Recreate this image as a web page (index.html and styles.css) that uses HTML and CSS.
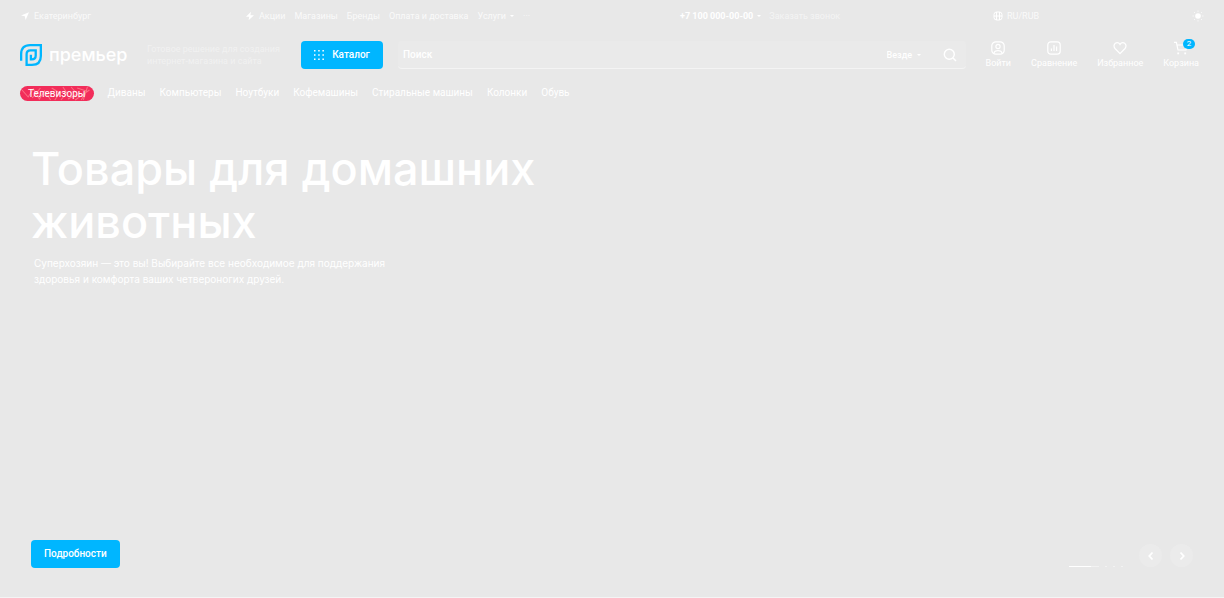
FILE: index.html
```html
<!DOCTYPE html>
<html lang="ru">
<head>
<meta charset="utf-8">
<meta name="viewport" content="width=device-width, initial-scale=1">
<title>Премьер</title>
<link rel="stylesheet" href="styles.css">
</head>
<body>
<div class="page">
  <header class="header">
    <div class="topbar">
      <a class="topbar-link" href="#"><svg class="icon-small" viewBox="0 0 10 10"><path d="M1 4.6 9 1.2 5.6 9 4.8 5.3Z" fill="currentColor"/></svg>Екатеринбург</a>
      <nav class="topmenu" aria-label="Основное меню">
        <a class="topbar-link" href="#"><svg class="icon-small" viewBox="0 0 10 10"><path d="M6 .8 1 5.8h3.2L3.6 9.2 9 4.2H5.4Z" fill="currentColor"/></svg>Акции</a>
        <a href="#">Магазины</a>
        <a href="#">Бренды</a>
        <a href="#">Оплата и доставка</a>
        <a class="with-caret" href="#">Услуги</a>
        <a href="#" aria-label="Ещё">···</a>
      </nav>
      <div class="contacts">
        <a class="phone with-caret" href="tel:+71000000000">+7 100 000-00-00</a>
        <a class="callback" href="#">Заказать звонок</a>
      </div>
      <div class="settings">
        <a class="topbar-link" href="#"><svg class="icon-small" viewBox="0 0 10 10" fill="none" stroke="currentColor"><rect x="1" y="1" width="8" height="8" rx="2.6"/><path d="M3.5 1v8M6.5 1v8M1 5h8"/></svg>RU/RUB</a>
        <button class="theme" aria-label="Тема"><svg viewBox="0 0 12 12"><circle cx="6" cy="6" r="2.8" fill="currentColor"/><path d="M6 .6v1M6 10.4v1M.6 6h1M10.4 6h1M2.1 2.1l.7.7M9.2 9.2l.7.7M2.1 9.9l.7-.7M9.2 2.8l.7-.7" stroke="currentColor"/></svg></button>
      </div>
    </div>

    <div class="mainbar">
      <a class="logo" href="#">
        <svg class="logo-mark" viewBox="0 0 21 21" fill="none" stroke="#00b6ff" stroke-width="2.2"><path d="M1.1 16V9.6Q1.1 1.1 9.6 1.1H19.9V11.4Q19.9 19.9 11.4 19.9H6.3V9.8Q6.3 6.1 10 6.1H15V11Q15 14.7 11.3 14.7H10.4V10.3"/></svg>
        <span>премьер</span>
      </a>
      <p class="tagline">Готовое решение для создания интернет-магазина и сайта</p>
      <button class="catalog"><svg class="catalog-icon" viewBox="0 0 10 10" fill="currentColor"><path d="M0 0h1.5v1.5H0zM4.2 0h1.5v1.5H4.2zM8.4 0h1.5v1.5H8.4zM0 4.2h1.5v1.5H0zM4.2 4.2h1.5v1.5H4.2zM8.4 4.2h1.5v1.5H8.4zM0 8.4h1.5v1.5H0zM4.2 8.4h1.5v1.5H4.2zM8.4 8.4h1.5v1.5H8.4z"/></svg>Каталог</button>
      <form class="search">
        <input class="search-input" type="text" placeholder="Поиск" aria-label="Поиск">
        <span class="with-caret"><select class="scope" aria-label="Где искать"><option>Везде</option></select></span>
        <button class="search-button" type="button" aria-label="Найти"><svg viewBox="0 0 14 14" fill="none" stroke="currentColor" stroke-width="1.4"><circle cx="6.3" cy="6.3" r="5"/><path d="m10 10 3 3"/></svg></button>
      </form>
      <nav class="actions" aria-label="Личный раздел">
        <a class="action" href="#"><svg viewBox="0 0 14 14"><rect x=".8" y=".8" width="12.4" height="12.4" rx="4"/><circle cx="7" cy="5.5" r="2.1"/><path d="M3 12.3Q3.4 9.7 7 9.7T11 12.3"/></svg>Войти</a>
        <a class="action" href="#"><svg viewBox="0 0 14 14"><rect x=".8" y=".8" width="12.4" height="12.4" rx="3"/><path d="M4.4 7.5V10M7 4v6M9.6 5.6V10"/></svg>Сравнение</a>
        <a class="action" href="#"><svg viewBox="0 0 14 14"><path d="M7 12.6 2 7.5C.1 5.4 1.2 1.6 4 1.6Q6 1.6 7 3.4 8 1.6 10 1.6c2.8 0 3.9 3.8 2 5.9Z"/></svg>Избранное</a>
        <a class="action" href="#"><svg viewBox="0 0 14 14"><path d="M0 1.4h2.4L4 9h8l1.2-5H3"/><path d="M3.3 12.4h1.8M10.3 12.4h1.8" stroke-width="1.8"/></svg>Корзина<span class="badge">2</span></a>
      </nav>
    </div>

    <nav class="categories" aria-label="Категории">
      <a class="hot" href="#">
        <svg class="hot-pattern" viewBox="0 0 72 15" preserveAspectRatio="none" fill="none" stroke="#fb6f82"><path d="M2 4 8 11 13 3 19 13 24 5 30 14M12 12l8-10M31 2l8 5-5 7M42 1l4 6-6 7M47 13 56 8 50 1M56 2l9 3-5 9M54 14l14-10M66 1l-4 13"/></svg>
        <span class="hot-label">Телевизоры</span>
      </a>
      <a href="#">Диваны</a>
      <a href="#">Компьютеры</a>
      <a href="#">Ноутбуки</a>
      <a href="#">Кофемашины</a>
      <a href="#">Стиральные машины</a>
      <a href="#">Колонки</a>
      <a href="#">Обувь</a>
    </nav>
  </header>

  <main class="hero">
    <h1 class="title">Товары для домашних животных</h1>
    <p class="lead">Суперхозяин — это вы! Выбирайте все необходимое для поддержания здоровья и комфорта ваших четвероногих друзей.</p>
    <div class="hero-footer">
      <a class="details" href="#">Подробности</a>
      <div class="slider">
        <div class="dots"><span class="progress"><span class="progress-fill"></span></span><span class="dot"></span><span class="dot"></span><span class="dot"></span></div>
        <button class="arrow" aria-label="Назад"><svg viewBox="0 0 10 10"><path d="M6.5 1.5 3.3 5l3.2 3.5"/></svg></button>
        <button class="arrow" aria-label="Вперёд"><svg viewBox="0 0 10 10"><path d="M3.5 1.5 6.7 5 3.5 8.5"/></svg></button>
      </div>
    </div>
  </main>
</div>
</body>
</html>
```
FILE: styles.css
```css
* { box-sizing: border-box; }

body {
  margin: 0;
  background: #e8e8e8;
  color: #fff;
  font: 9px/12px Roboto, "Liberation Sans", sans-serif;
}

a { color: inherit; text-decoration: none; }
p, h1 { margin: 0; }
svg { display: block; flex: none; }

button, input, select {
  padding: 0;
  border: 0;
  background: none;
  color: inherit;
  font: inherit;
}

.page {
  display: flex;
  flex-direction: column;
  min-height: 100vh;
  border-bottom: 1px solid #f4f4f4;
}

.header { padding: 0 20px; }

.topbar {
  display: grid;
  grid-template-columns: 225fr 435fr 313fr 211fr;
  align-items: center;
  height: 32px;
  color: #fafafa;
  white-space: nowrap;
}

.topbar-link { display: flex; align-items: center; gap: 4px; }
.icon-small { width: 10px; height: 10px; color: #fff; }
.topmenu { display: flex; gap: 9px; }

.with-caret { display: inline-flex; align-items: center; gap: 4px; }
.with-caret::after {
  content: "";
  border: 2px solid transparent;
  border-top-color: #fff;
  border-bottom: 0;
}

.contacts { display: flex; gap: 8px; }
.phone { color: #fff; font-weight: 700; }
.callback { color: #f4f4f4; }
.settings { display: flex; justify-content: space-between; align-items: center; }
.theme { color: #fff; }
.theme svg { width: 12px; height: 12px; }

.mainbar {
  display: flex;
  align-items: center;
  height: 46px;
}

.logo {
  display: flex;
  align-items: center;
  gap: 7px;
  width: 127px;
  font-family: Inter, sans-serif;
  font-size: 18px;
  font-weight: 500;
  line-height: 20px;
}
.logo-mark { width: 22px; height: 22px; }

.tagline { width: 154px; padding-right: 16px; color: #f1f1f1; }

.catalog {
  display: flex;
  align-items: center;
  justify-content: center;
  gap: 8px;
  width: 82px;
  height: 28px;
  border-radius: 4px;
  background: #00b6ff;
  font-size: 10px;
  font-weight: 500;
}
.catalog-icon { width: 10px; height: 10px; }

.search {
  display: flex;
  flex: 1;
  align-items: center;
  height: 28px;
  margin: 0 11px 0 15px;
  padding: 0 9px 0 5px;
  border-bottom: 1px solid #f4f4f4;
  border-radius: 4px;
  background: #eaeaea;
}
.search-input { flex: 1; min-width: 0; font-size: 10px; font-weight: 500; outline: 0; }
.search-input::placeholder { color: #fff; opacity: 1; }
.scope { appearance: none; font-weight: 500; }
.search-button { margin-left: 22px; }
.search-button svg { width: 14px; height: 14px; }

.actions { display: flex; }
.action {
  position: relative;
  display: flex;
  flex-direction: column;
  align-items: center;
  gap: 2px;
  padding: 0 10px;
}
.action:first-child { padding-left: 9px; }
.action:last-child { padding-right: 5px; }
.action svg {
  width: 14px;
  height: 14px;
  fill: none;
  stroke: #fff;
  stroke-width: 1.2;
}
.badge {
  position: absolute;
  top: -2px;
  right: 9px;
  width: 12px;
  border-radius: 5px;
  background: #00b6ff;
  font-size: 8px;
  line-height: 10px;
  text-align: center;
}

.categories {
  display: flex;
  align-items: center;
  gap: 14px;
  height: 30px;
  font-size: 10px;
  white-space: nowrap;
}
.hot {
  position: relative;
  padding: 0 8px;
  overflow: hidden;
  border-radius: 8px;
  background: #f22d5a;
  line-height: 15px;
}
.hot-pattern { position: absolute; inset: 0; width: 100%; height: 100%; }
.hot-label { position: relative; }

.hero {
  display: flex;
  flex: 1;
  flex-direction: column;
  padding: 34px 31px 29px;
}
.title {
  max-width: 560px;
  font-family: Inter, sans-serif;
  font-size: 45px;
  font-weight: 500;
  line-height: 53px;
}
.lead {
  max-width: 380px;
  margin: 7px 0 0 3px;
  font-family: Inter, sans-serif;
  font-size: 10px;
  line-height: 16px;
}

.hero-footer {
  display: flex;
  align-items: flex-end;
  justify-content: space-between;
  margin-top: auto;
}
.details {
  padding: 0 13px;
  border-radius: 4px;
  background: #00b6ff;
  font-size: 10px;
  font-weight: 500;
  line-height: 28px;
}
.slider { display: flex; align-items: flex-end; gap: 8px; padding-bottom: 1px; }
.dots { display: flex; gap: 6px; margin-right: 8px; }
.progress { width: 30px; height: 1px; background: #f2f2f2; }
.progress-fill { display: block; width: 22px; height: 1px; background: #fff; }
.dot { width: 2px; height: 1px; background: #f2f2f2; }
.arrow {
  display: grid;
  place-items: center;
  width: 23px;
  height: 23px;
  border-radius: 50%;
  background: #ebebeb;
}
.arrow svg { width: 10px; height: 10px; fill: none; stroke: #fff; stroke-width: 1.8; }
```
